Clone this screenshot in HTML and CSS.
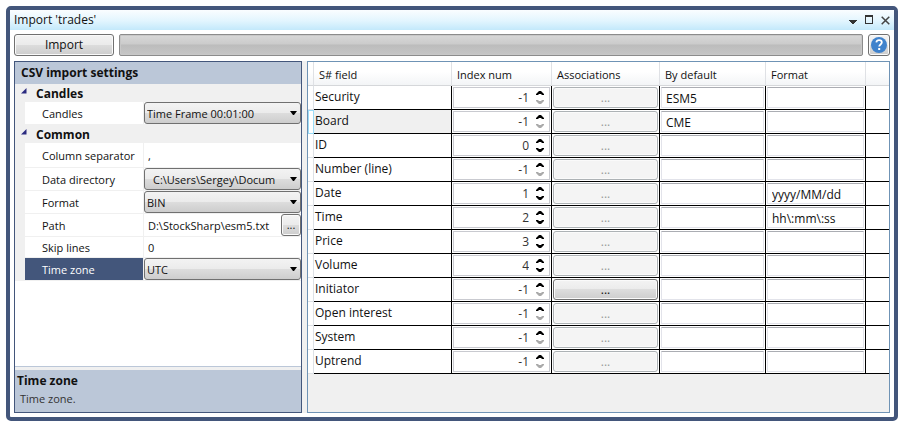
FILE: index.html
```html
<!DOCTYPE html>
<html lang="en">
<head>
<meta charset="utf-8">
<title>Import 'trades'</title>
<link rel="stylesheet" href="styles.css">
</head>
<body>
<main class="window">
  <header class="titlebar">
    <h1 class="title">Import 'trades'</h1>
    <button class="caption" aria-label="Menu"><svg width="9" height="12" viewBox="0 0 9 12"><path d="M0 6h8v1h-1v1h-1v1h-1v1h-2v-1h-1v-1h-1v-1h-1z" fill="#333"/></svg></button>
    <button class="caption" aria-label="Maximize"><svg width="9" height="10" viewBox="0 0 9 10"><path d="M0 0h8v9h-8zM1 2v6h6v-6z" fill="#333" fill-rule="evenodd"/></svg></button>
    <button class="caption" aria-label="Close"><svg width="9" height="9" viewBox="0 0 9 9"><path d="M.7.7l7.600 7.600M8.300.7l-7.600 7.600" stroke="#444" stroke-width="1.500"/></svg></button>
  </header>
  <div class="toolbar">
    <button class="btn import">Import</button>
    <div class="progress" role="progressbar" aria-label="Import progress"></div>
    <button class="btn help" aria-label="Help"><svg width="16" height="16" viewBox="0 0 16 16"><circle cx="8" cy="8" r="8" fill="#3f82cc"/><path d="M5.300 5.400c.3-1.600 1.400-2.200 2.800-2.200 1.600 0 2.700.9 2.700 2.300 0 1.900-2.600 2-2.600 4.100" fill="none" stroke="#fff" stroke-width="1.800"/><rect x="7.200" y="11" width="2" height="2" fill="#fff"/></svg></button>
  </div>
  <div class="content">
    <section class="settings">
      <h2 class="heading">CSV import settings</h2>
      <h3 class="category"><svg width="6" height="6" viewBox="0 0 6 6"><path d="M5.500 0v5.500h-5.500z" fill="#2b2b80"/></svg>Candles</h3>
      <div class="props">
        <div class="prop"><label class="name" for="candles">Candles</label><div class="value"><select class="select" id="candles"><option>Time Frame 00:01:00</option></select><svg class="arrow" width="7" height="4" viewBox="0 0 7 4"><path d="M0 0h7l-3 4h-1z"/></svg></div></div>
      </div>
      <h3 class="category"><svg width="6" height="6" viewBox="0 0 6 6"><path d="M5.500 0v5.500h-5.500z" fill="#2b2b80"/></svg>Common</h3>
      <div class="props">
        <div class="prop tall"><label class="name" for="sep">Column separator</label><div class="value"><input class="plain" id="sep" value=","></div></div>
        <div class="prop"><label class="name" for="dir">Data directory</label><div class="value"><select class="select inset" id="dir"><option>C:\Users\Sergey\Docum</option></select><svg class="arrow" width="7" height="4" viewBox="0 0 7 4"><path d="M0 0h7l-3 4h-1z"/></svg></div></div>
        <div class="prop"><label class="name" for="format">Format</label><div class="value"><select class="select" id="format"><option>BIN</option></select><svg class="arrow" width="7" height="4" viewBox="0 0 7 4"><path d="M0 0h7l-3 4h-1z"/></svg></div></div>
        <div class="prop"><label class="name" for="path">Path</label><div class="value"><input class="plain" id="path" value="D:\StockSharp\esm5.txt"><button class="btn browse" aria-label="Browse">...</button></div></div>
        <div class="prop short"><label class="name" for="skip">Skip lines</label><div class="value"><input class="plain" id="skip" value="0"></div></div>
        <div class="prop selected"><label class="name" for="zone">Time zone</label><div class="value"><select class="select" id="zone"><option>UTC</option></select><svg class="arrow" width="7" height="4" viewBox="0 0 7 4"><path d="M0 0h7l-3 4h-1z"/></svg></div></div>
      </div>
      <div class="description"><strong>Time zone</strong><p>Time zone.</p></div>
    </section>
    <section class="fields">
      <table class="grid">
        <colgroup><col class="c-mark"><col class="c-name"><col class="c-index"><col class="c-assoc"><col class="c-default"><col class="c-format"><col></colgroup>
        <thead><tr><td></td><th>S# field</th><th>Index num</th><th>Associations</th><th>By default</th><th>Format</th><td></td></tr></thead>
        <tbody id="rows"></tbody>
      </table>
    </section>
  </div>
</main>
<script src="fields.js"></script>
</body>
</html>
```
FILE: styles.css
```css
* { box-sizing: border-box; }
body {
  margin: 0;
  padding: 6px 5px 8px 6px;
  min-height: 100vh;
  display: flex;
  background: #fff;
  color: #111;
  font: 11px/16px "Open Sans", "Noto Sans", sans-serif;
}
button, input, select { font: inherit; color: inherit; margin: 0; }
h1, h2, h3, p { margin: 0; font-size: inherit; }
h2, h3, strong { font-size: 12px; }
svg { display: block; }
.window {
  flex: 1;
  min-width: 0;
  display: flex;
  flex-direction: column;
  border: 4px solid #43567b;
  border-radius: 5px;
  background: #fff;
}
.titlebar {
  display: flex;
  align-items: center;
  height: 20px;
  padding: 0 4px;
  gap: 7px;
  background: linear-gradient(#fafdff, #e2f5fe 55%, #c3e9fb);
}
.title { flex: 1; font-size: 12px; font-weight: 400; }
.caption { padding: 0; border: 0; background: none; }
.toolbar { display: flex; gap: 5px; padding: 4px 4px 5px; }
.btn {
  height: 22px;
  padding: 0;
  border: 1px solid #707070;
  border-radius: 3px;
  background: linear-gradient(#f3f3f3, #ebebeb 50%, #dddddd 50%, #cdcdcd);
  box-shadow: inset 0 0 0 1px #fafafa;
}
.import { width: 100px; font-size: 12px; }
.help { width: 22px; padding: 2px; }
.progress {
  flex: 1;
  border: 1px solid #8c8c8c;
  border-radius: 2px;
  background: linear-gradient(#d8d8d8, #cbcbcb 45%, #bcbcbc 50%, #c6c6c6);
  box-shadow: inset 0 0 0 1px #c8c8c8;
}
.content {
  flex: 1;
  display: flex;
  gap: 5px;
  margin: 0 4px 4px;
  background: #f0f0f0;
}
.settings {
  flex: 0 0 288px;
  display: flex;
  flex-direction: column;
  border: 1px solid #43567b;
  background: #fff;
}
.heading { height: 22px; padding: 0 6px; line-height: 22px; background: #bbc7d8; }
.category {
  display: flex;
  align-items: center;
  gap: 9px;
  height: 18px;
  padding: 2px 0 0 6px;
  background: #f0f0f0;
}
.category svg { margin-bottom: 6px; }
.props {
  display: grid;
  gap: 1px;
  padding: 0 0 1px 10px;
  background: #f0f0f0;
}
.prop {
  display: grid;
  grid-template-columns: 118px minmax(0, 1fr);
  gap: 1px;
  height: 22px;
}
.tall { height: 24px; }
.short { height: 20px; }
.name {
  display: flex;
  align-items: center;
  padding: 2px 0 0 17px;
  background: #fff;
  white-space: nowrap;
}
.selected .name { background: #43567b; color: #fff; }
.value { position: relative; display: flex; background: #fff; }
.select {
  appearance: none;
  width: 100%;
  height: 22px;
  padding: 2px 16px 0 2px;
  border: 1px solid #707070;
  border-radius: 3px;
  background: linear-gradient(#f3f3f3, #ebebeb 50%, #dddddd 50%, #cdcdcd);
}
.inset { padding-left: 8px; }
.arrow { position: absolute; right: 4px; top: 9px; pointer-events: none; }
.plain {
  flex: 1;
  min-width: 0;
  padding: 2px 4px 0;
  border: 0;
  background: none;
}
.browse { width: 20px; }
.description {
  margin-top: auto;
  height: 46px;
  padding: 6px 2px 0;
  border-top: 1px solid #bbc7d8;
  background: linear-gradient(#f0f0f0 3px, #bbc7d8 3px);
}
.description p { padding: 2px 3px 0; color: #333; }
.fields { flex: 1; min-width: 0; border: 1px solid #6f93b5; }
.grid { width: 100%; table-layout: fixed; border-spacing: 0; }
.grid tbody { font-size: 12px; }
.c-mark { width: 6px; }
.c-name { width: 138px; }
.c-index { width: 100px; }
.c-assoc { width: 108px; }
.c-default { width: 106px; }
.c-format { width: 100px; }
.grid thead tr { background: linear-gradient(#fff 40%, #f2f4f6); }
.grid thead th, .grid thead td {
  height: 24px;
  padding: 2px 5px 0;
  border-right: 1px solid #dfe1e5;
  border-bottom: 1px solid #d5d7da;
  text-align: left;
  font-weight: 400;
}
.grid thead td { padding: 0; }
.grid thead td:last-child { border-right: 0; }
.grid tbody td {
  height: 24px;
  padding: 1px;
  border-right: 1px solid #000;
  border-bottom: 1px solid #000;
  background: #fff;
  vertical-align: top;
}
.grid tbody td.label { padding-top: 3px; }
.grid tbody td.mark { border-color: #dde1e6; }
.grid tbody td:last-child { border-right: 0; }
.grid tbody .current td.label { background: #f0f0f0; }
.grid tbody .current td.mark { border: 1px solid #9bdcf8; }
.spin {
  display: flex;
  height: 21px;
  border: 1px solid #c9cad0;
  padding-right: 5px;
}
.number {
  flex: 1;
  min-width: 0;
  padding: 0 7px 0 0;
  border: 0;
  background: none;
  color: #333;
  text-align: right;
}
.steps { display: flex; flex-direction: column; justify-content: center; gap: 5px; }
.step { display: block; height: 4px; padding: 0; border: 0; background: none; color: #000; }
.step:disabled { color: #aaa; }
.assoc { display: block; width: 100%; height: 21px; }
.assoc:disabled { border-color: #adb2b5; background: #f4f4f4; color: #999; }
.text {
  display: block;
  width: 100%;
  height: 21px;
  padding: 2px 4px 0;
  border: 1px solid #e2e3ea;
  border-top-color: #abadb3;
  background: #fff;
}
```
FILE: fields.js
```javascript
const fields = [
  { name: "Security", index: -1, byDefault: "ESM5" },
  { name: "Board", index: -1, byDefault: "CME", current: true },
  { name: "ID", index: 0 },
  { name: "Number (line)", index: -1 },
  { name: "Date", index: 1, format: "yyyy/MM/dd" },
  { name: "Time", index: 2, format: "hh\\:mm\\:ss" },
  { name: "Price", index: 3 },
  { name: "Volume", index: 4 },
  { name: "Initiator", index: -1, mapped: true },
  { name: "Open interest", index: -1 },
  { name: "System", index: -1 },
  { name: "Uptrend", index: -1 }
];

const arrow = (path) =>
  `<svg width="8" height="4" viewBox="0 0 8 4"><path d="${path}" fill="currentColor"/></svg>`;

document.getElementById("rows").innerHTML = fields.map((f) => `
  <tr class="${f.current ? "current" : ""}">
    <td class="mark"></td>
    <td class="label">${f.name}</td>
    <td><div class="spin">
      <input class="number" aria-label="${f.name} index" value="${f.index}">
      <div class="steps">
        <button class="step" aria-label="Increase">${arrow("M3 0h2l3 3v1h-2l-1-1h-2l-1 1h-2v-1z")}</button>
        <button class="step" aria-label="Decrease" ${f.index < 0 ? "disabled" : ""}>${arrow("M3 4h2l3-3v-1h-2l-1 1h-2l-1-1h-2v1z")}</button>
      </div>
    </div></td>
    <td><button class="btn assoc" aria-label="${f.name} associations" ${f.mapped ? "" : "disabled"}>...</button></td>
    <td><input class="text" aria-label="${f.name} default" value="${f.byDefault || ""}"></td>
    <td><input class="text" aria-label="${f.name} format" value="${f.format || ""}"></td>
    <td></td>
  </tr>`).join("");
```
